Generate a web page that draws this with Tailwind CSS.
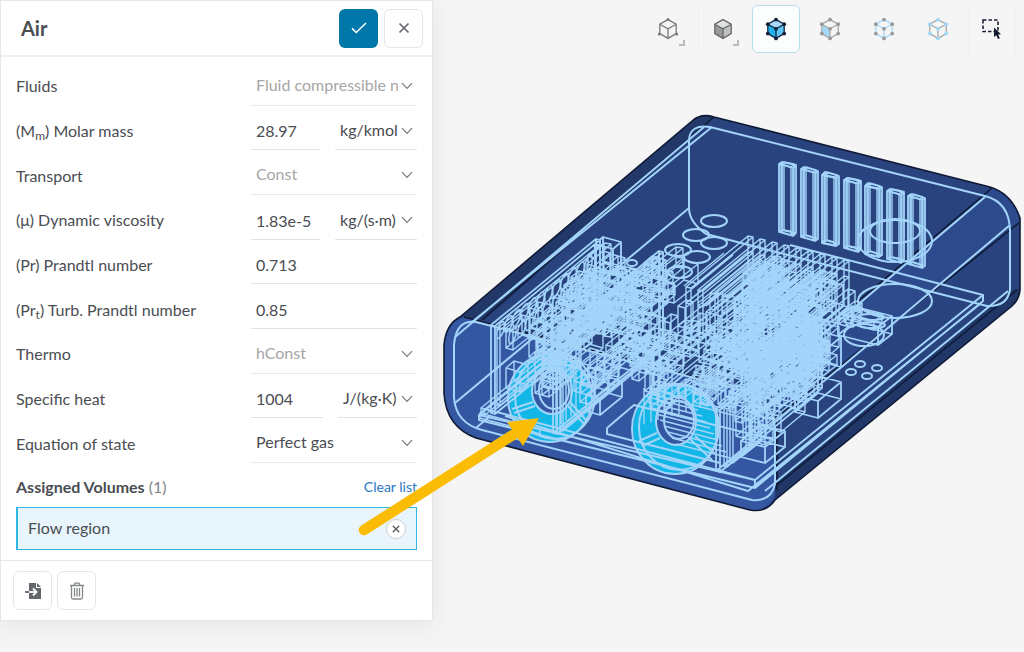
<!DOCTYPE html>
<html lang="en">
<head>
<meta charset="utf-8">
<title>Air – Material</title>
<script src="https://cdn.jsdelivr.net/npm/@tailwindcss/browser@4"></script>
</head>
<body class="relative flex min-h-screen items-start overflow-hidden bg-[#f5f5f5] font-['Lato',sans-serif] text-base text-[#4a4d52]">

<svg class="hidden" aria-hidden="true">
  <symbol id="chev" viewBox="0 0 12 8"><path d="M1 1.2 6 6.4 11 1.2" fill="none" stroke="#77797c" stroke-width="1.2"/></symbol>
  <symbol id="nodes" viewBox="0 0 24 24"><circle cx="12" cy="2.6" r="1.9"/><circle cx="20.2" cy="7.2" r="1.9"/><circle cx="20.2" cy="16.6" r="1.9"/><circle cx="12" cy="21.4" r="1.9"/><circle cx="3.8" cy="16.6" r="1.9"/><circle cx="3.8" cy="7.2" r="1.9"/><circle cx="12" cy="11.8" r="1.9"/></symbol>
  <symbol id="edges" viewBox="0 0 24 24"><path d="M12 2.6 20.2 7.2V16.6L12 21.4 3.8 16.6V7.2ZM3.8 7.2 12 11.8 20.2 7.2M12 11.8V21.4" fill="none" stroke-width="1.3"/></symbol>
</svg>

<aside class="w-[433px] shrink-0 border border-[#e6e6e6] bg-white shadow-[0_4px_24px_rgba(0,0,0,0.07)]">
  <header class="flex h-14 items-center gap-1.5 border-b-2 border-[#f0f0f0] pr-[9px] pl-5">
    <h1 class="flex-1 text-xl font-bold">Air</h1>
    <button aria-label="Apply" class="grid size-[39px] place-items-center rounded-md bg-[#0077a9]">
      <svg class="h-3 w-4" viewBox="0 0 16 12" fill="none" stroke="#fff" stroke-width="1.5"><path d="M1 6.4 5.2 10.5 15 1"/></svg>
    </button>
    <button aria-label="Cancel" class="grid size-[39px] place-items-center rounded-md border border-[#e6e6e6]">
      <svg class="size-3" viewBox="0 0 12 12" stroke="#66696d" stroke-width="1.7"><path d="M1.5 1.5 10.5 10.5M10.5 1.5 1.5 10.5"/></svg>
    </button>
  </header>

  <form class="mt-1 grid h-[402px] auto-rows-fr px-[15px]">
    <div class="flex justify-between">
      <label for="fluid" class="self-center pt-1.5">Fluids</label>
      <div class="relative flex w-[166px] border-b border-[#e8e8e8]">
        <select id="fluid" disabled class="mr-[19px] min-w-0 flex-1 appearance-none overflow-hidden pt-1 pl-[5px] text-clip whitespace-nowrap text-[#a6a6a6]"><option>Fluid compressible newtonian</option></select>
        <svg class="pointer-events-none absolute top-[21px] right-1 h-2 w-3"><use href="#chev"/></svg>
      </div>
    </div>
    <div class="flex justify-between">
      <label for="mass" class="self-center pt-1.5">(M<sub class="text-xs">m</sub>) Molar mass</label>
      <div class="flex w-[166px] gap-[15px]">
        <input id="mass" value="28.97" class="w-0 flex-1 border-b border-[#e3e3e3] pt-2 pl-[5px]">
        <div class="relative flex w-[82px] border-b border-[#e3e3e3]">
          <select aria-label="Molar mass unit" class="w-full appearance-none pt-1.5 pl-[5px]"><option>kg/kmol</option></select>
          <svg class="pointer-events-none absolute top-[21px] right-1 h-2 w-3"><use href="#chev"/></svg>
        </div>
      </div>
    </div>
    <div class="flex justify-between">
      <label for="transport" class="self-center pt-1.5">Transport</label>
      <div class="relative flex w-[166px] border-b border-[#e8e8e8]">
        <select id="transport" disabled class="w-full appearance-none pt-1 pl-[5px] text-[#a6a6a6]"><option>Const</option></select>
        <svg class="pointer-events-none absolute top-[21px] right-1 h-2 w-3"><use href="#chev"/></svg>
      </div>
    </div>
    <div class="flex justify-between">
      <label for="visc" class="self-center pt-1.5">(μ) Dynamic viscosity</label>
      <div class="flex w-[166px] gap-[15px]">
        <input id="visc" value="1.83e-5" class="w-0 flex-1 border-b border-[#e3e3e3] pt-2 pl-[5px]">
        <div class="relative flex w-[82px] border-b border-[#e3e3e3]">
          <select aria-label="Viscosity unit" class="w-full appearance-none pt-1.5 pl-[5px]"><option>kg/(s·m)</option></select>
          <svg class="pointer-events-none absolute top-[21px] right-1 h-2 w-3"><use href="#chev"/></svg>
        </div>
      </div>
    </div>
    <div class="flex justify-between">
      <label for="pr" class="self-center pt-1.5">(Pr) Prandtl number</label>
      <input id="pr" value="0.713" class="w-[166px] border-b border-[#e3e3e3] pt-2 pl-[5px]">
    </div>
    <div class="flex justify-between">
      <label for="prt" class="self-center pt-1.5">(Pr<sub class="text-xs">t</sub>) Turb. Prandtl number</label>
      <input id="prt" value="0.85" class="w-[166px] border-b border-[#e3e3e3] pt-2 pl-[5px]">
    </div>
    <div class="flex justify-between">
      <label for="thermo" class="self-center pt-1.5">Thermo</label>
      <div class="relative flex w-[166px] border-b border-[#e8e8e8]">
        <select id="thermo" disabled class="w-full appearance-none pt-1 pl-[5px] text-[#a6a6a6]"><option>hConst</option></select>
        <svg class="pointer-events-none absolute top-[21px] right-1 h-2 w-3"><use href="#chev"/></svg>
      </div>
    </div>
    <div class="flex justify-between">
      <label for="heat" class="self-center pt-1.5">Specific heat</label>
      <div class="flex w-[166px] gap-[15px]">
        <input id="heat" value="1004" class="w-0 flex-1 border-b border-[#e3e3e3] pt-2 pl-[5px]">
        <div class="relative flex w-[79px] border-b border-[#e3e3e3]">
          <select aria-label="Specific heat unit" class="w-full appearance-none pt-1.5 pl-[5px]"><option>J/(kg·K)</option></select>
          <svg class="pointer-events-none absolute top-[21px] right-1 h-2 w-3"><use href="#chev"/></svg>
        </div>
      </div>
    </div>
    <div class="flex justify-between">
      <label for="eos" class="self-center pt-1.5">Equation of state</label>
      <div class="relative flex w-[166px] border-b border-[#e8e8e8]">
        <select id="eos" class="w-full appearance-none pt-1 pl-[5px]"><option>Perfect gas</option></select>
        <svg class="pointer-events-none absolute top-[21px] right-1 h-2 w-3"><use href="#chev"/></svg>
      </div>
    </div>
  </form>

  <section class="px-[15px] pt-3 pb-2.5">
    <div class="flex h-8 items-center justify-between pb-2">
      <h2><strong class="font-bold">Assigned Volumes</strong> <span class="text-[#808387]">(1)</span></h2>
      <a href="#" class="text-sm text-[#2b78c5]">Clear list</a>
    </div>
    <div class="flex h-[43px] items-center justify-between border border-l-2 border-[#31b7e6] bg-[#e8f5fc] pr-[10px] pl-[10px]">
      <span class="pb-0.5">Flow region</span>
      <button aria-label="Remove Flow region" class="grid size-5 place-items-center rounded-full border border-[#cfcfcf] bg-white">
        <svg class="size-2" viewBox="0 0 8 8" stroke="#5b5e62" stroke-width="1.4"><path d="M.8.8 7.2 7.2M7.2.8.8 7.2"/></svg>
      </button>
    </div>
  </section>

  <footer class="flex gap-[5px] border-t border-[#e6e6e6] px-3 py-2.5">
    <button aria-label="Import" class="grid size-[39px] place-items-center rounded-md border border-[#e6e6e6]">
      <svg class="h-[18px] w-[18px]" viewBox="0 0 18 18"><path d="M5 1h7v5h5v11H5Z" fill="#63666a"/><path d="M13 1v4h4Z" fill="#63666a"/><path d="M5 10h7" stroke="#fff" stroke-width="1.8"/><path d="M9 6.5 12.5 10 9 13.5" fill="none" stroke="#fff" stroke-width="1.8"/><path d="M1 10h4" stroke="#63666a" stroke-width="1.8"/></svg>
    </button>
    <button aria-label="Delete" class="grid size-[39px] place-items-center rounded-md border border-[#e6e6e6]">
      <svg class="h-[18px] w-4" viewBox="0 0 16 18" fill="none" stroke="#85888b" stroke-width="1.3"><path d="M1 3.5H15M5 3.2 6 1.2H10L11 3.2M2.5 3.5V15.5Q2.5 17 4 17H12Q13.500 17 13.500 15.500V3.500M5.500 6V14.500M8 6V14.500M10.500 6V14.500"/></svg>
    </button>
  </footer>
</aside>

<main class="min-w-0 flex-1">
  <nav class="flex h-[57px] items-center justify-end gap-1.5 pr-2" aria-label="Selection tools">
    <button aria-label="Wireframe view" class="relative grid size-12 place-items-center">
      <svg class="size-6" viewBox="0 0 24 24" stroke="#77797c"><use href="#edges"/><g fill="#77797c" stroke="none"><circle cx="12" cy="2.600" r="1.500"/><circle cx="3.400" cy="17" r="1.500"/><circle cx="20.600" cy="17" r="1.500"/></g></svg>
      <svg class="absolute right-[7px] bottom-[7px] size-[6px]" viewBox="0 0 6 6"><path d="M5 0V5H0" fill="none" stroke="#bbb" stroke-width="2"/></svg>
    </button>
    <button aria-label="Solid view" class="relative grid size-12 place-items-center border-l border-[#efefef]">
      <svg class="size-6" viewBox="0 0 24 24"><path d="M12 2.600 20.200 7.200 12 11.800 3.800 7.200Z" fill="#e2e4e4"/><path d="M3.800 7.200 12 11.800V21.400L3.800 16.600Z" fill="#999"/><path d="M20.200 7.200 12 11.800V21.400L20.200 16.600Z" fill="#bfc1c1"/><use href="#edges" stroke="#66696b"/></svg>
      <svg class="absolute right-[7px] bottom-[7px] size-[6px]" viewBox="0 0 6 6"><path d="M5 0V5H0" fill="none" stroke="#bbb" stroke-width="2"/></svg>
    </button>
    <button aria-label="Select volumes" aria-pressed="true" class="grid size-12 place-items-center rounded-md border border-[#b7dcea] bg-[#fcfdfd]">
      <svg class="size-6" viewBox="0 0 24 24"><path d="M12 2.600 20.200 7.200 12 11.800 3.800 7.200Z" fill="#a9dafb"/><path d="M3.800 7.200 12 11.800V21.400L3.800 16.600Z" fill="#1eb2ee"/><path d="M20.200 7.200 12 11.800V21.400L20.200 16.600Z" fill="#5fc5f6"/><use href="#edges" stroke="#14233f"/><use href="#nodes" fill="#14203a"/></svg>
    </button>
    <button aria-label="Select faces" class="grid size-12 place-items-center">
      <svg class="size-6" viewBox="0 0 24 24"><path d="M3.800 7.200 12 11.800V21.400L3.800 16.600Z" fill="#a5d8f9"/><use href="#edges" stroke="#a9a9a9"/><use href="#nodes" fill="#999"/></svg>
    </button>
    <button aria-label="Select edges" class="grid size-12 place-items-center">
      <svg class="size-6" viewBox="0 0 24 24"><use href="#edges" stroke="#a5d8f9"/><use href="#nodes" fill="#999"/></svg>
    </button>
    <button aria-label="Select vertices" class="grid size-12 place-items-center">
      <svg class="size-6" viewBox="0 0 24 24"><use href="#edges" stroke="#a9a9a9"/><use href="#nodes" fill="#9fd6fb"/></svg>
    </button>
    <button aria-label="Box select" class="grid size-12 place-items-center border-x border-[#efefef]">
      <svg class="size-6" viewBox="0 0 24 24"><path d="M3 3H18V14.500H3Z" fill="none" stroke="#1b2233" stroke-width="1.600" stroke-dasharray="3.500 2"/><path d="M14 10.500V20L16.300 18.200 18 22 19.800 21.200 18.200 17.600 21 17.300Z" fill="#141c2e"/></svg>
    </button>
  </nav>
  <svg class="block w-full" viewBox="433 57 591 595" role="img" aria-label="Electronics enclosure model" stroke-linejoin="round">
    <path d="M444 345Q446 324 460 317L692 121Q701 113 714 117L990 187Q1012 194 1020 218V290Q1019 300 1012 306L775 500Q766 513 750 510L476 438Q446 427 444 393Z" fill="#29437f"/>
    <path d="M460 317 692 121Q701 113 714 117L484 320Z" fill="#213868"/>
    <path d="M992 188Q1013 195 1020 222L775 425 740 400Z" fill="#2d4a8c"/>
    <path d="M775 482 1012 290 1020 288Q1019 300 1012 306L775 500Z" fill="#203768"/>
    <path d="M444 345Q447 322 464 317L745 390Q775 402 775 430V496Q766 513 750 510L476 438Q446 427 444 393Z" fill="#3557a2"/>
    <g fill="none" stroke="#101a35" stroke-width="1.600">
      <path d="M444 345Q446 324 460 317L692 121Q701 113 714 117L990 187Q1012 194 1020 218V290Q1019 300 1012 306L775 500Q766 513 750 510L476 438Q446 427 444 393Z"/>
      <path d="M464 317 745 390Q775 402 777 430V490M482 320 714 117M992 188 855 304M1020 222 760 430M1017 290 776 486"/>
    </g>
    <g fill="#12b6e7">
      <ellipse cx="550" cy="398" rx="41" ry="44"/><ellipse cx="675" cy="429" rx="42" ry="45"/>
    </g>
    <g fill="#3557a2"><ellipse cx="552" cy="391" rx="20" ry="23"/><ellipse cx="676" cy="421" rx="20" ry="24"/></g>
    <g fill="none" stroke="#a3d4fa" stroke-width="2">
      <path d="M454 345Q456 319 476 322L745 391Q773 400 775 428V484Q771 502 752 500L482 430Q456 423 454 398Z"/>
      <path d="M689 140Q690 124 710 127L985 196Q1009 202 1010 230V290Q1007 307 987 306L706 234Q689 222 689 208Z"/>
      <path d="M455 337 704 127M472 322 712 127M455 403 689 208M985 197 776 374M1010 225 838 370M1008 291 765 491M485 409 479 415V420L755 488V480L479 415M485 409 755 480 983 295 790 245M755 488 983 301V295M476 428 490 416M505 416 748 491 980 304M607 428 634 405 775 440M607 428V434L720 463"/>
      <ellipse cx="550" cy="398" rx="42" ry="44"/><ellipse cx="555" cy="396" rx="40" ry="43"/>
      <ellipse cx="552" cy="391" rx="20" ry="23"/><ellipse cx="554" cy="390" rx="15" ry="19"/>
      <ellipse cx="675" cy="429" rx="43" ry="45"/><ellipse cx="679" cy="427" rx="40" ry="43"/>
      <ellipse cx="676" cy="421" rx="20" ry="24"/><ellipse cx="679" cy="420" rx="15" ry="19"/>
      <path d="M512 409 533 402M514 413 535 406M568 406 584 424M571 403 587 421M639 441 657 433M642 446 660 438M690 439 712 460M695 436 715 454"/>
      <ellipse cx="714" cy="221" rx="13" ry="6"/><ellipse cx="714" cy="243" rx="13" ry="6"/><ellipse cx="696" cy="235" rx="13" ry="6"/><ellipse cx="697" cy="257" rx="13" ry="6"/><ellipse cx="678" cy="250" rx="13" ry="6"/><ellipse cx="680" cy="272" rx="12" ry="6"/>
      <ellipse cx="632" cy="263" rx="5" ry="3"/><ellipse cx="622" cy="271" rx="5" ry="3"/>
      <ellipse cx="895" cy="241" rx="37" ry="21"/><ellipse cx="895" cy="231" rx="25" ry="12"/><ellipse cx="895" cy="301" rx="37" ry="17"/>
      <ellipse cx="860" cy="364" rx="5" ry="3"/><ellipse cx="877" cy="368" rx="5" ry="3"/><ellipse cx="851" cy="372" rx="5" ry="3"/><ellipse cx="867" cy="376" rx="5" ry="3"/>
      <ellipse cx="864" cy="335" rx="20" ry="11"/><ellipse cx="871" cy="317" rx="13" ry="3"/><ellipse cx="872" cy="325" rx="13" ry="3"/>
    </g>
    <g id="parts" fill="none" stroke="#a3d4fa"></g>
  </svg>
</main>

<svg class="pointer-events-none absolute top-[400px] left-[350px] h-[150px] w-[200px]" viewBox="350 400 200 150" aria-hidden="true">
  <path d="M364 530 516 433" stroke="#fbbc05" stroke-width="10.500" stroke-linecap="round"/>
  <path d="M539 418 507 422 523 446Z" fill="#fbbc05"/>
</svg>

<script>
  // Wireframe parts, drawn in the enclosure's axonometric projection.
  const out = { fine: '', bold: '' };
  const A = 0.26, B = -0.82;
  // x, y: front bottom-left corner; a: width; b: depth; h: height
  function box(x, y, a, b, h, k = 'fine') {
    const p = [[0, 0], [a, 0], [a, b], [0, b]].map(([u, v]) => [Math.round(x + u + v), Math.round(y + u * A + v * B)]);
    const ring = d => 'M' + p.map(q => q[0] + ' ' + (q[1] - d)).join('L') + 'Z';
    out[k] += ring(0) + ring(h) + p.map(q => 'M' + q[0] + ' ' + q[1] + 'v' + -h).join('');
  }
  let seed = 11;
  const rnd = () => (seed = (seed * 16807) % 2147483647) / 2147483647;
  const snap = (r, s) => Math.floor(r / s) * s;
  // components standing on a regular mounting grid
  function cluster(x, y, a, b, h, n) {
    for (let i = 0; i < n; i++) {
      const u = snap(rnd() * a, 7), v = snap(rnd() * b, 8), z = snap(rnd() * h, 10);
      box(x + u + v, y + u * A + v * B - z, 7 + snap(rnd() * 14, 7), 8 + snap(rnd() * 24, 8), 10 + snap(rnd() * 20, 10));
    }
  }
  function ports(x, y, n, dx, dy) {
    for (let i = 0; i < n; i++) {
      const cx = Math.round(x + i * dx), cy = Math.round(y + i * dy);
      out.fine += `M${cx - 3} ${cy + 6}q-1 -7 3 -12t4 0q1 7 -3 12t-4 0Z`;
    }
  }
  // rear ventilation slots
  for (let i = 0; i < 7; i++) {
    const x = 779 + i * 21.500, y = 232 + i * 5.400;
    box(x, y, 14, 3, 68, 'bold');
    box(x + 2, y, 10, 3, 68);
  }
  // left board with its perforations and connectors
  box(491, 413, 4, 105, 88, 'bold');
  box(497, 405, 3, 103, 76);
  ports(500, 330, 12, 8, -6);
  ports(512, 335, 10, 8.500, -6.500);
  box(595, 270, 18, 8, 26, 'bold');
  cluster(506, 388, 24, 78, 52, 26);
  cluster(556, 352, 24, 46, 60, 34);
  cluster(566, 398, 22, 50, 20, 12);
  cluster(520, 398, 30, 30, 30, 9);
  box(586, 411, 14, 22, 16, 'bold');
  box(480, 418, 60, 0, 5);
  box(481, 414, 4, 110, 6);
  for (let i = 0; i < 5; i++) out.fine += `M${556 + i * 5} ${428 - i * 4}V${350 - i * 5}`;
  // second board
  box(553, 433, 4, 106, 95, 'bold');
  box(560, 430, 3, 100, 84);
  cluster(590, 362, 30, 62, 60, 32);
  ports(606, 303, 8, 7, -5);
  cluster(616, 392, 40, 62, 44, 22);
  // heat sink
  for (let i = 0; i < 9; i++) {
    box(686 + i * 12, 333 + i * 3, 5, 62, 46);
    box(686 + i * 12, 333 + i * 3, 5, 62, 30);
  }
  for (let i = 0; i < 12; i++) out.fine += `M${684 + i * 9} ${286 + i * 2}l40 -33M${690 + i * 8} ${300 + i * 3}l52 -42`;
  box(654, 395, 98, 64, 50);
  cluster(650, 408, 96, 66, 34, 40);
  cluster(735, 330, 15, 25, 40, 34);
  cluster(704, 400, 66, 64, 66, 52);
  for (let i = 0; i < 9; i++) out.fine += `M${644 + i * 7} ${424 - i * 2}V${388 - i}M${644 + i * 4} ${396 + i * 6}l54 14`;
  // third board and right-hand components
  box(716, 471, 4, 102, 62, 'bold');
  box(724, 466, 3, 22, 58);
  box(730, 462, 3, 22, 56);
  cluster(738, 428, 22, 52, 50, 26);
  cluster(736, 446, 18, 30, 14, 6);
  box(741, 457, 24, 20, 16, 'bold');
  box(795, 412, 23, 23, 17, 'bold');
  box(795, 380, 23, 23, 30, 'bold');
  cluster(776, 392, 22, 30, 90, 24);
  box(838, 335, 40, 14, 18, 'bold');
  box(844, 322, 30, 8, 8);
  cluster(832, 322, 22, 8, 6, 3);
  document.getElementById('parts').innerHTML =
    `<path stroke-width="1.400" d="${out.fine}"/><path stroke-width="1.800" d="${out.bold}"/>`;
</script>
</body>
</html>
